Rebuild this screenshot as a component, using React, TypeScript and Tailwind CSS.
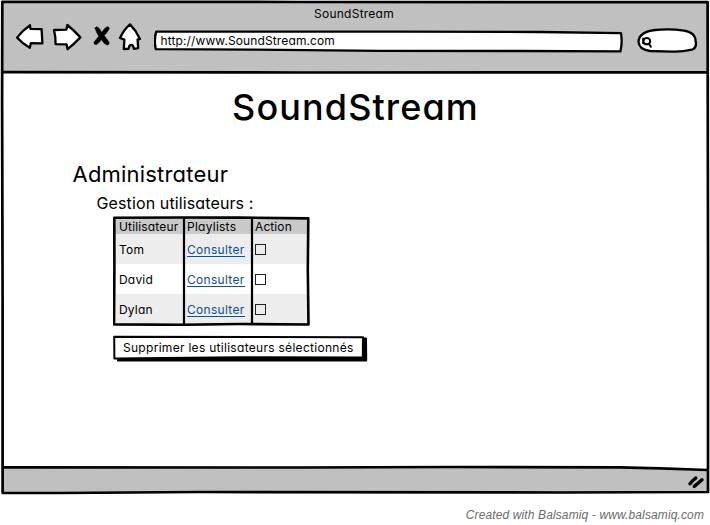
const USERS = ["Tom", "David", "Dylan"];

function WindowFrame() {
  return (
    <svg className="pointer-events-none absolute inset-0" width="710" height="497" fill="none" stroke="#000" strokeWidth="2.7" strokeLinejoin="round" strokeLinecap="round">
      <path d="M2.3 1.8 L300 2 L707.6 2.1 L708 250 L708 492 L560 492.5 L200 492 L60 493 L2.6 492.8 L2.6 300 L2.1 100 Z" />
      <path d="M2.5 72.2 L300 72.5 L707.8 72.3" />
      <path d="M2.8 467.4 L300 467.5 L450 467 L620 467.3 L660 468.3 L707.5 470" />
    </svg>
  );
}

function NavIcons() {
  return (
    <svg className="block shrink-0" width="130" height="30" viewBox="14 22 130 30" fill="#fff" stroke="#000" strokeWidth="2.3" strokeLinejoin="round" strokeLinecap="round">
      <path d="M17 37.6 Q23 30 30 25.2 L30.4 28.9 L41.6 29.2 L42.4 43.4 L30.8 43.2 L29.8 47.8 Q22 43.4 17 37.6 Z" />
      <path d="M54 30 L66.4 29.6 L67.4 25 Q74 30.4 80.4 37.4 Q74 44 67.6 49.2 L66.6 44.4 L55.6 44.2 Q55.8 37 54 30 Z" />
      <g fill="#000" stroke="#000" strokeWidth="0.6">
        <path d="M95.2 28.2 Q95.4 26.2 98 27.2 Q100 29 101.8 32.6 Q103.8 28.4 106.8 26.9 Q109.6 26.6 109.2 28.8 Q107.6 32 104.2 35.6 Q106.4 38.6 109 42 Q109.6 44.6 107.4 45 Q104 44.2 101.4 39.6 Q99.4 43 96.4 44.6 Q93.6 44.8 94 42.2 Q96.6 39 98.8 36.2 Q95.8 31.6 95.2 28.2 Z" />
      </g>
      <path d="M120 38 Q124 29.4 130 24.4 Q136 30.4 140 39 L137.6 39.4 L138.2 48.2 L133.9 48.8 L133 45.6 Q131 44.2 129.4 45.8 L128.4 48.8 L123.8 49 L124.4 39.6 Z" />
    </svg>
  );
}

function AddressBar() {
  return (
    <div className="relative ml-[10px] h-6 w-[470px] shrink-0 pl-[6.5px] pt-[3px]">
      <svg className="absolute inset-0" width="470" height="24" viewBox="154 29 470 24" fill="#fff" stroke="#000" strokeWidth="2.3" strokeLinejoin="round">
        <path d="M156.2 31.6 L400 31.6 L540 32 L621 33.2 Q622.6 42 620.4 51.4 L520 51 L380 50.8 L250 49.6 L155.8 49.2 Q153.8 40 156.2 31.6 Z" />
      </svg>
      <div className="relative whitespace-nowrap text-[12px] leading-[17px] tracking-[0.12px]">http://www.SoundStream.com</div>
    </div>
  );
}

function SearchBox() {
  return (
    <svg className="ml-[12px] block shrink-0" width="62" height="28" viewBox="636 27 62 28" fill="#fff" stroke="#000" strokeWidth="2.3" strokeLinecap="round">
      <path d="M638.5 41.5 C639 34 647 31 655 30 Q670 28.6 684 30.6 Q695.4 32.4 695.6 41 Q697.2 47.6 692 49.6 Q682 52 672 51.6 L650 51 Q638.7 49.4 638.5 41.5 Z" />
      <ellipse cx="646.8" cy="41.2" rx="3.4" ry="3.1" strokeWidth="2" />
      <path d="M643.2 38.6 V43.2 M649 43.8 L650.8 46.8" strokeWidth="2" />
    </svg>
  );
}

function UserTable() {
  return (
    <div className="relative ml-[113px] h-[110px] w-[197px] pl-[1px] pt-[2px] text-[12px]">
      <div className="grid h-4 w-[194px] grid-cols-[70px_68px_56px] bg-[#c9c9c9] leading-[17px]">
        <div className="pl-[5px] tracking-[0.15px]">Utilisateur</div>
        <div className="pl-[3px] tracking-[0.25px]">Playlists</div>
        <div className="pl-[3px] tracking-[0.1px]">Action</div>
      </div>
      {USERS.map((name) => (
        <div key={name} className="grid h-[30px] w-[194px] grid-cols-[70px_68px_56px] items-center even:bg-[#ededed]">
          <div className="pl-[5px] pt-px tracking-[0.2px]">{name}</div>
          <div className="pl-[3px]">
            <a className="block h-[15px] w-[58px] border-b border-[#0f5299] leading-[15px] tracking-[0.3px] text-[#0f4f96]">Consulter</a>
          </div>
          <div className="pl-[3px]">
            <div className="size-[11px] border border-[#222]" />
          </div>
        </div>
      ))}
      <svg className="absolute inset-0" width="197" height="110" viewBox="113 216 197 110" fill="none" stroke="#000" strokeWidth="2.6" strokeLinejoin="round">
        <path d="M114.3 217.8 L180 217.5 L240 217.6 L308.3 218.4 L307.8 270 L308.5 324.5 L240 324 L180 324.8 L114 324.4 L114.4 270 Z" />
        <path d="M184 218 V324.5 M252 218 V324.5" strokeWidth="2.2" />
      </svg>
    </div>
  );
}

function DeleteButton() {
  return (
    <button className="relative ml-[113px] mt-[9px] block h-[28px] w-[255px] pl-[10px] text-left">
      <svg className="absolute inset-0" width="255" height="28" viewBox="113 335 255 28" stroke="#000" strokeWidth="2" strokeLinejoin="round">
        <path d="M118 340 L366 338.6 L366.2 360.4 L118 360.6 Z" />
        <path d="M114.2 336.8 L363 337.2 L362.8 357.4 L240 357.2 L114.4 358.4 Z" fill="#fff" />
      </svg>
      <span className="relative block whitespace-nowrap pb-[2px] text-[12px] leading-[16px] tracking-[0.29px]">Supprimer les utilisateurs sélectionnés</span>
    </button>
  );
}

export default function App() {
  return (
    <div className="h-[525px] w-[710px] overflow-hidden bg-white font-['Inter',sans-serif] font-normal text-black [font-feature-settings:'cv11']">
      <div className="relative flex h-[497px] flex-col px-[2px] pb-[4px] pt-[2px]">
        <header className="mr-px h-[70px] shrink-0 bg-[#c0c0c0]">
          <div className="pr-px pt-1 text-center text-[12px] leading-[15px] tracking-[0.24px]">SoundStream</div>
          <div className="flex items-start pl-3">
            <div className="mt-px"><NavIcons /></div>
            <div className="mt-2"><AddressBar /></div>
            <div className="mt-[6px]"><SearchBox /></div>
          </div>
        </header>
        <main className="-ml-[2px] flex-1">
          <h1 className="pl-[3px] pt-[13px] text-center text-[36px] font-[450] leading-[44px] tracking-[1.1px]">SoundStream</h1>
          <h2 className="ml-[72.5px] mt-[31px] text-[22px] leading-[28px] tracking-[0.2px]">Administrateur</h2>
          <h3 className="ml-[96.5px] mt-[5px] text-[16px] leading-[20px] tracking-[0.12px]">Gestion utilisateurs :</h3>
          <div className="mt-[3px]"><UserTable /></div>
          <DeleteButton />
        </main>
        <footer className="mr-px h-[25px] shrink-0 bg-[#c0c0c0] [clip-path:polygon(0_0,87%_0,100%_3px,100%_100%,0_100%)]">
          <svg className="ml-auto mr-[2px] mt-[5px] block" width="18" height="18" viewBox="687 473 18 18" fill="none" stroke="#000" strokeWidth="3.4" strokeLinecap="round">
            <path d="M690 483.8 Q692.5 480.6 695.8 478 M694.2 486.4 Q698 483.4 702 479.8" />
          </svg>
        </footer>
        <WindowFrame />
      </div>
      <p className="pr-[6px] pt-[9px] text-right font-['Liberation_Sans',Arial,sans-serif] text-[12px] font-normal italic leading-[18px] tracking-[0.12px] text-[#6b6b6b]">Created with Balsamiq - www.balsamiq.com</p>
    </div>
  );
}
